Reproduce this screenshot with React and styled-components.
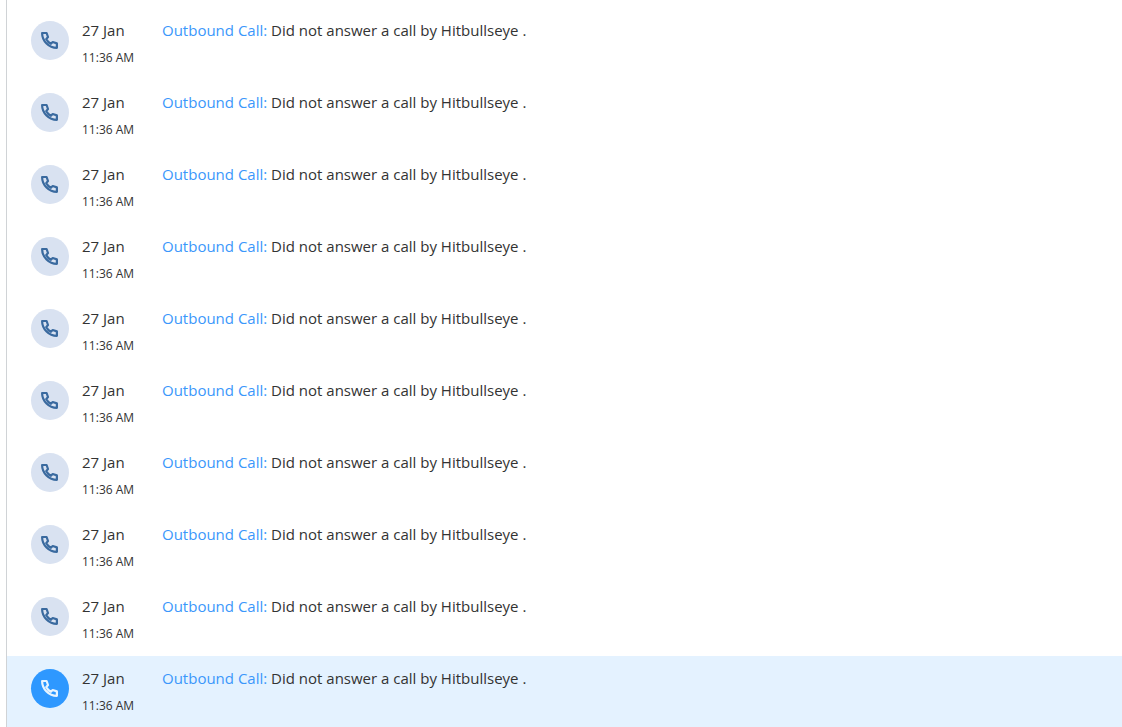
import styled, { createGlobalStyle } from 'styled-components'

const GlobalStyle = createGlobalStyle`
	*{
		box-sizing: border-box;
	}

	body{
		margin: 0;
		overflow-x: hidden;
		background-color: #fff;
		color: #333;
		font-family: 'Open Sans', 'Noto Sans', sans-serif;
		scrollbar-width: none;
	}
`

const calls = Array.from({ length: 10 }, (_, i) => ({
	id: i + 1,
	day: '27 Jan',
	time: '11:36 AM',
	type: 'Outbound Call:',
	text: 'Did not answer a call by Hitbullseye .',
}))

const PhoneIcon = () => (
	<svg
		width="18"
		height="19"
		viewBox="0 0 18 19"
		fill="none"
		stroke="currentColor"
		strokeWidth="2.2"
		strokeLinejoin="round"
		aria-hidden="true"
	>
		<path d="M1.1 2H5.6L7 6L5.2 8.1C6.2 10.1 7.9 11.8 9.9 12.8L11.7 11L15.9 12.4V16.8C7.9 16.8 1.1 10.1 1.1 2Z" />
	</svg>
)

const App = () => {
	const activeId = 10

	return (
		<>
			<GlobalStyle />

			<Timeline>
				{calls.map((call) => (
					<Row key={call.id} $active={call.id === activeId}>
						<Badge $active={call.id === activeId}>
							<PhoneIcon />
						</Badge>

						<When>
							<Day>{call.day}</Day>
							<Time>{call.time}</Time>
						</When>

						<Message>
							<span>{call.type}</span> {call.text}
						</Message>
					</Row>
				))}
			</Timeline>
		</>
	)
}

export default App

const Timeline = styled.ul`
	list-style: none;
	margin: 0 0 0 6px;
	padding: 8px 0 0;
	border-left: 1px solid #d0d3d6;
`

const Row = styled.li`
	display: flex;
	align-items: flex-start;
	height: 72px;
	padding: 12px 24px 0;
	background-color: ${({ $active }) => ($active ? '#e4f2ff' : 'transparent')};
`

const Badge = styled.div`
	display: flex;
	align-items: center;
	justify-content: center;
	flex-shrink: 0;
	width: 38px;
	height: 39px;
	margin: 1px 13px 0 0;
	border-radius: 50%;
	background-color: ${({ $active }) => ($active ? '#2e98ff' : '#d9e2f1')};
	color: ${({ $active }) => ($active ? '#e8f4ff' : '#3a6a9f')};
`

const When = styled.div`
	flex-shrink: 0;
	width: 80px;
`

const Day = styled.div`
	font-size: 15px;
	line-height: 20px;
`

const Time = styled.div`
	margin-top: 10px;
	font-size: 12px;
	line-height: 16px;
`

const Message = styled.p`
	margin: 0;
	font-size: 15px;
	line-height: 20px;

	span{
		color: #3b97fb;
	}
`
